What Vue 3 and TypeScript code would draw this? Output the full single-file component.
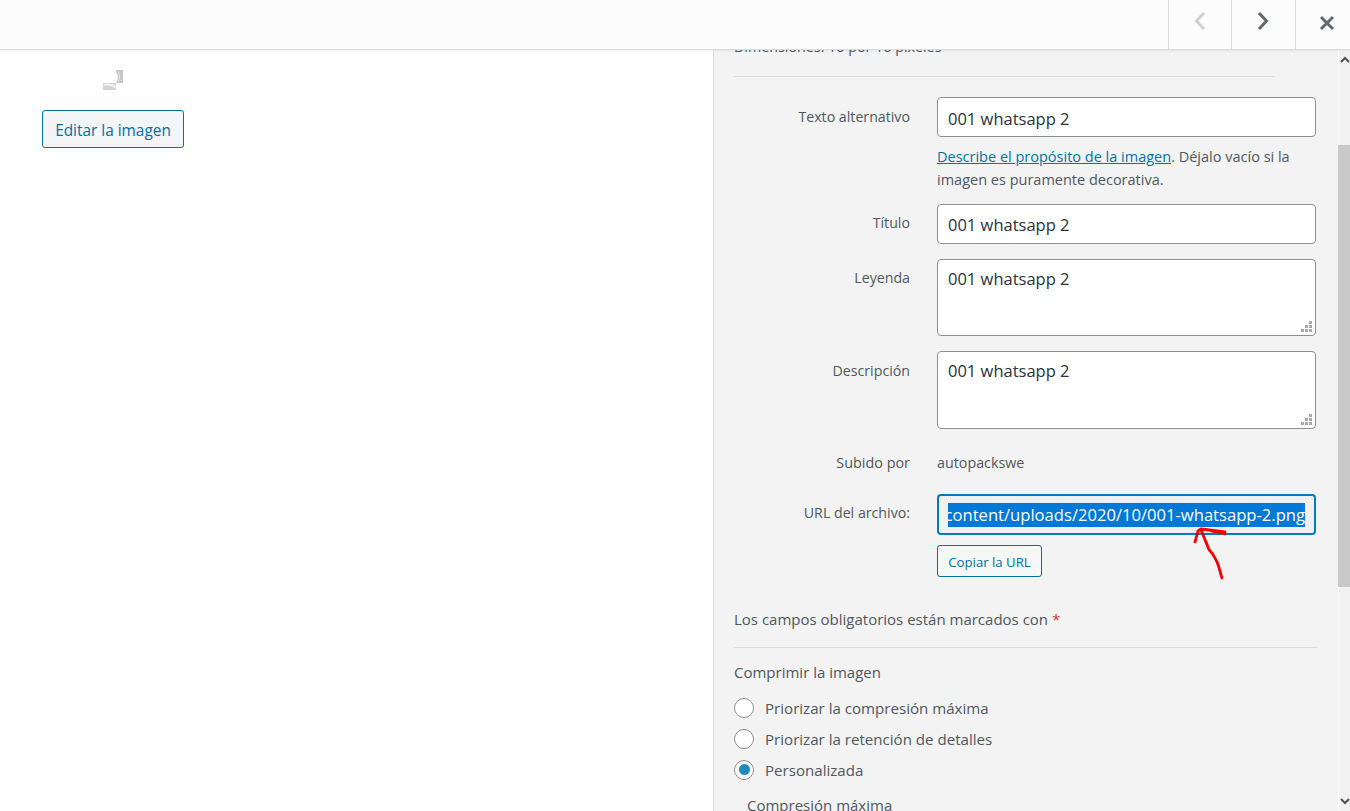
<script setup lang="ts">
const radios = [
  { label: 'Priorizar la compresión máxima', on: false },
  { label: 'Priorizar la retención de detalles', on: false },
  { label: 'Personalizada', on: true },
]
</script>

<template>
  <div class="page">
    <header class="bar">
      <button class="nav dim" aria-label="Anterior">
        <svg width="14" height="20" viewBox="0 0 14 20"><path d="M11 2 3.500 10 11 18" /></svg>
      </button>
      <button class="nav mid" aria-label="Siguiente">
        <svg width="14" height="20" viewBox="0 0 14 20"><path d="M3 2 10.500 10 3 18" /></svg>
      </button>
      <button class="nav close" aria-label="Cerrar">
        <svg width="16" height="16" viewBox="0 0 16 16"><path d="M2 2 14 14M14 2 2 14" /></svg>
      </button>
    </header>

    <main class="body">
      <section class="preview">
        <svg class="thumb" width="20" height="20" viewBox="0 0 20 20">
          <path d="M13 0H20V13H13V12C16 9 15 4 13 2Z" fill="#c6c6c6" />
          <path d="M15 1C17 4 17 9 15 12" stroke="#e6e6e6" stroke-width="1" fill="none" />
          <path d="M0 13H13V20H0Z" fill="#d4d4d4" />
          <path d="M1 15C5 14 9 15 13 17" stroke="#f2f2f2" stroke-width="2" fill="none" />
        </svg>
        <button class="btn edit">Editar la imagen</button>
      </section>

      <aside class="side">
        <div class="scroll">
          <p class="dims">Dimensiones: 16 por 16 píxeles</p>
          <hr class="rule short" />

          <div class="row first">
            <label>Texto alternativo</label>
            <div class="field">
              <div class="input">001 whatsapp 2</div>
              <p class="help"><a>Describe el propósito de la imagen</a>. Déjalo vacío si la imagen es puramente decorativa.</p>
            </div>
          </div>
          <div class="row title">
            <label>Título</label>
            <div class="field"><div class="input">001 whatsapp 2</div></div>
          </div>
          <div class="row caption">
            <label>Leyenda</label>
            <div class="field">
              <div class="input area">001 whatsapp 2
                <svg class="grip" width="11" height="11" viewBox="0 0 11 11"><path d="M8 0h3v3H8zM4 4h3v3H4zM8 4h3v3H8zM0 8h3v3H0zM4 8h3v3H4zM8 8h3v3H8z" /></svg>
              </div>
            </div>
          </div>
          <div class="row desc">
            <label>Descripción</label>
            <div class="field">
              <div class="input area tall">001 whatsapp 2
                <svg class="grip" width="11" height="11" viewBox="0 0 11 11"><path d="M8 0h3v3H8zM4 4h3v3H4zM8 4h3v3H8zM0 8h3v3H0zM4 8h3v3H4zM8 8h3v3H8z" /></svg>
              </div>
            </div>
          </div>
          <div class="row by">
            <label>Subido por</label>
            <div class="field plain">autopackswe</div>
          </div>
          <div class="row url">
            <label>URL del archivo:</label>
            <div class="field">
              <div class="input focus"><div class="clip"><span>https://autopackswe.com/wp-content/uploads/2020/10/001-whatsapp-2.png</span></div></div>
              <button class="btn copy">Copiar la URL</button>
            </div>
          </div>

          <p class="req">Los campos obligatorios están marcados con <em>*</em></p>
          <hr class="rule" />
          <h3 class="comp">Comprimir la imagen</h3>
          <div v-for="r in radios" :key="r.label" class="radio">
            <span class="dot" :class="{ on: r.on }"></span>{{ r.label }}
          </div>
          <p class="max">Compresión máxima</p>
        </div>

        <div class="track">
          <svg class="arrow up" width="12" height="8" viewBox="0 0 12 8"><path d="M2 6 6 2 10 6" /></svg>
          <div class="thumbbar"></div>
          <svg class="arrow down" width="12" height="8" viewBox="0 0 12 8"><path d="M2 2 6 6 10 2" /></svg>
        </div>
      </aside>
    </main>

    <svg class="scribble" width="60" height="70" viewBox="0 0 60 70">
      <path d="M8 32 11 21 14 19 38 22M38 24 24 21M14 20C16 24 17 28 19 32 21 36 21 40 24 42 27 45 27 47 29 50 32 55 33 62 35 68" />
    </svg>
  </div>
</template>

<style>
html, body { margin: 0; overflow: hidden; background: #fff; }
</style>

<style scoped>
.page {
  position: relative;
  width: 1350px;
  height: 811px;
  overflow: hidden;
  font-family: "Open Sans", "Noto Sans", sans-serif;
  font-size: 14px;
  color: #50575e;
}
.bar {
  position: absolute;
  inset: 0 0 auto 0;
  z-index: 2;
  height: 49px;
  display: flex;
  justify-content: flex-end;
  background: #fcfcfc;
  border-bottom: 1px solid #dcdcde;
  box-shadow: 0 1px 2px rgba(0, 0, 0, 0.06);
}
.nav {
  width: 63px;
  height: 49px;
  padding: 0;
  display: flex;
  align-items: center;
  justify-content: center;
  background: none;
  border: 0;
  border-left: 1px solid #dcdcde;
}
.nav.mid { width: 64px; }
.nav.close { width: 55px; padding-left: 7px; padding-bottom: 3px; }
.nav svg { margin-bottom: 8px; margin-right: 1px; }
.nav.close svg { margin: 0; }
.nav path { fill: none; stroke: #646970; stroke-width: 3; }
.nav.dim path { stroke: #d0d0d2; }

.body { display: flex; height: 100%; }
.preview {
  width: 713px;
  flex: none;
  padding: 70px 0 0 42px;
  box-sizing: border-box;
}
.thumb { display: block; margin: 0 0 20px 61px; }
.btn {
  display: block;
  box-sizing: border-box;
  font-family: inherit;
  color: #0071a1;
  background: #f3f5f6;
  border: 1px solid #0071a1;
  border-radius: 3px;
  padding: 0;
}
.edit { width: 142px; height: 38px; font-size: 15.400px; padding-top: 2px; }

.side {
  flex: 1;
  display: flex;
  background: #f3f3f3;
  border-left: 1px solid #dddddd;
  min-width: 0;
}
.scroll {
  width: 604px;
  flex: none;
  box-sizing: border-box;
  padding: 38px 20px 0 20px;
}
p { margin: 0; }
.dims { line-height: 18px; font-size: 14.300px; }
.rule { border: 0; border-top: 1px solid #dddddd; margin: 0; width: 583px; }
.rule.short { margin-top: 20px; width: 541px; }

.row { display: grid; grid-template-columns: 176px 379px; column-gap: 27px; margin-right: -20px; }
.row label { text-align: right; padding-top: 9px; line-height: 20px; font-size: 14.200px; }
.row.first label { padding-top: 10px; }
.first { margin-top: 20px; }
.title { margin-top: 13px; }
.caption { margin-top: 15px; }
.desc { margin-top: 15px; }
.by { margin-top: 24px; }
.row.by label { padding-top: 0; line-height: 20px; font-size: 14.400px; }
.plain { line-height: 20px; font-size: 14.300px; }
.url { margin-top: 21px; }
.row.desc label { padding-top: 10px; }
.input {
  position: relative;
  box-sizing: border-box;
  height: 40px;
  padding: 0 10px;
  line-height: 41px;
  font-size: 16.500px;
  color: #2c3338;
  background: #fff;
  border: 1px solid #8c8f94;
  border-radius: 4px;
}
.title .input { line-height: 39px; }
.area { height: 77px; line-height: 37px; }
.area.tall { height: 78px; }
.grip { position: absolute; right: 3px; bottom: 3px; }
.grip path { fill: #a9a9a9; }
.help { margin-top: 8px; line-height: 23px; font-size: 14.500px; }
.help a { color: #0073aa; text-decoration: underline; }
.focus {
  height: 41px;
  border: 2px solid #007cba;
  background: #f0f0f1;
  padding: 0 9px;
  line-height: 24px;
  display: flex;
  align-items: center;
}
.clip { flex: 1; min-width: 0; display: flex; justify-content: flex-end; overflow: hidden; }
.clip span { flex: none; background: #0078d7; color: #fff; font-size: 16.600px; }
.copy { width: 105px; height: 32px; margin-top: 10px; font-size: 13.200px; background: #f6f7f7; padding-top: 2px; }
.req { margin-top: 32px; line-height: 20px; font-size: 15px; }
.req em { color: #d63638; font-style: normal; }
.req + .rule { margin-top: 18px; }
.comp { font: inherit; font-size: 15px; margin: 14px 0 0; line-height: 20px; }
.radio { display: flex; align-items: center; gap: 11px; height: 31px; font-size: 15.100px; }
.comp + .radio { margin-top: 10px; }
.dot {
  width: 20px;
  height: 20px;
  box-sizing: border-box;
  border: 1px solid #8c8f94;
  border-radius: 50%;
  background: #fff;
  display: flex;
  align-items: center;
  justify-content: center;
}
.dot.on::after { content: ""; width: 11px; height: 11px; border-radius: 50%; background: #1e8cbe; }
.max { margin: 10px 0 0 13px; line-height: 20px; font-size: 15px; }

.track {
  width: 12px;
  margin-left: 20px;
  flex: none;
  position: relative;
  background: #f1f1f1;
  border-left: 1px solid #fff;
  box-sizing: border-box;
  padding-top: 145px;
}
.thumbbar { height: 442px; background: #c9c9c9; margin-left: -1px; }
.arrow { position: absolute; left: 0; }
.arrow path { fill: none; stroke: #505050; stroke-width: 2; }
.up { top: 56px; }
.down { bottom: 6px; }

.scribble { position: absolute; left: 1187px; top: 510px; z-index: 1; }
.scribble path { fill: none; stroke: #f20000; stroke-width: 2.800; stroke-linecap: round; stroke-linejoin: round; }
</style>
